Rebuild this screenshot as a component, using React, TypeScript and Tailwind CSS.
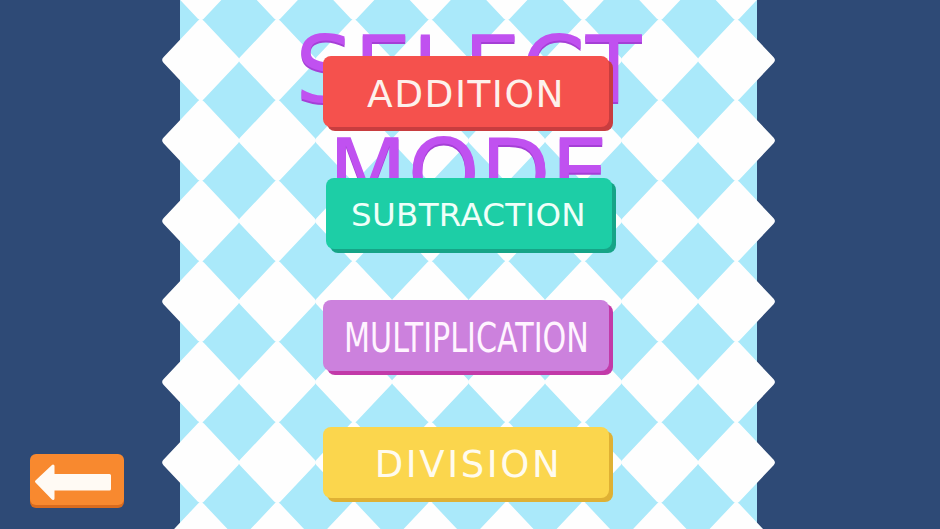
import React from "react";

// white diamonds of the checkered board (panel coordinates)
function Diamonds() {
  const hx = 40;
  const hy = 42.2;
  const s = 4;
  const ix = hx - 1.39 * s;
  const iy = hy - 1.44 * s;
  const items: React.ReactNode[] = [];
  for (let i = 0; i < 8; i++) {
    for (let j = -1; j < 8; j++) {
      const cx = 20.8 + 76.5 * i;
      const cy = 60 + 80.5 * j;
      items.push(
        <polygon
          key={`${i}-${j}`}
          points={`${cx},${cy - iy} ${cx + ix},${cy} ${cx},${cy + iy} ${cx - ix},${cy}`}
        />
      );
    }
  }
  return (
    <svg
      width={577}
      height={529}
      className="col-start-1 row-start-1 block overflow-visible"
      fill="#fefefe"
      stroke="#fefefe"
      strokeWidth={2 * s}
      strokeLinejoin="round"
    >
      {items}
    </svg>
  );
}

function BackButton() {
  return (
    <button className="flex h-[51px] w-[94px] items-start rounded-[6px] bg-[#f8892f] shadow-[0_3px_0_0_#d96b1e]">
      <svg width={94} height={51} viewBox="0 0 94 51">
        <polygon
          points="6.5,27.5 23,12 23,21.5 79.5,21.5 79.5,35 23,35 23,44.5"
          fill="#fffaf4"
          stroke="#fffaf4"
          strokeWidth={3}
          strokeLinejoin="round"
        />
      </svg>
    </button>
  );
}

export default function App() {
  return (
    <div className="flex h-[529px] w-[940px] overflow-hidden bg-[#2e4a76] font-['DejaVu_Sans',sans-serif]">
      {/* Left side */}
      <div className="flex w-[180px] shrink-0 flex-col justify-end pb-[24px] pl-[30px]">
        <BackButton />
      </div>

      {/* Board */}
      <div className="grid w-[577px] shrink-0 bg-[#aae9fa]">
        <Diamonds />

        <div className="col-start-1 row-start-1 pt-[19px] text-center text-[92px] leading-[103px] text-[#c051f0] [text-shadow:0_2px_0_#a53fd6]">
          SELECT
          <br />
          MODE
        </div>

        <div className="col-start-1 row-start-1 flex flex-col items-center pr-[5px] pt-[56px]">
          <button className="flex h-[71px] w-[286px] items-center justify-center rounded-[8px] bg-[#f5514d] pt-[5px] text-[37.5px] tracking-[1.5px] text-[#fdf1ec] shadow-[4px_4px_0_0_#c83d3f]">
            ADDITION
          </button>

          <button className="ml-[5px] mt-[51px] flex h-[71px] w-[286px] items-center justify-center rounded-[8px] bg-[#1dcea6] pt-[4px] text-[32.5px] tracking-[0.3px] text-[#effff9] shadow-[4px_4px_0_0_#16a487]">
            SUBTRACTION
          </button>

          <button className="mt-[51px] flex h-[71px] w-[286px] items-center justify-center rounded-[8px] bg-[#cc81dd] pt-[6px] text-[#fff4ff] shadow-[4px_4px_0_0_#c23aa9]">
            <span className="inline-block scale-x-[0.735] whitespace-nowrap text-[41px]">
              MULTIPLICATION
            </span>
          </button>

          <button className="mt-[56px] flex h-[71px] w-[286px] items-center justify-center rounded-[8px] bg-[#fbd64d] pl-[5px] pt-[4px] text-[37px] tracking-[2.6px] text-[#fffbee] shadow-[4px_4px_0_0_#dfb134]">
            DIVISION
          </button>
        </div>
      </div>

      {/* Right side */}
      <div className="w-[183px] shrink-0" />
    </div>
  );
}
